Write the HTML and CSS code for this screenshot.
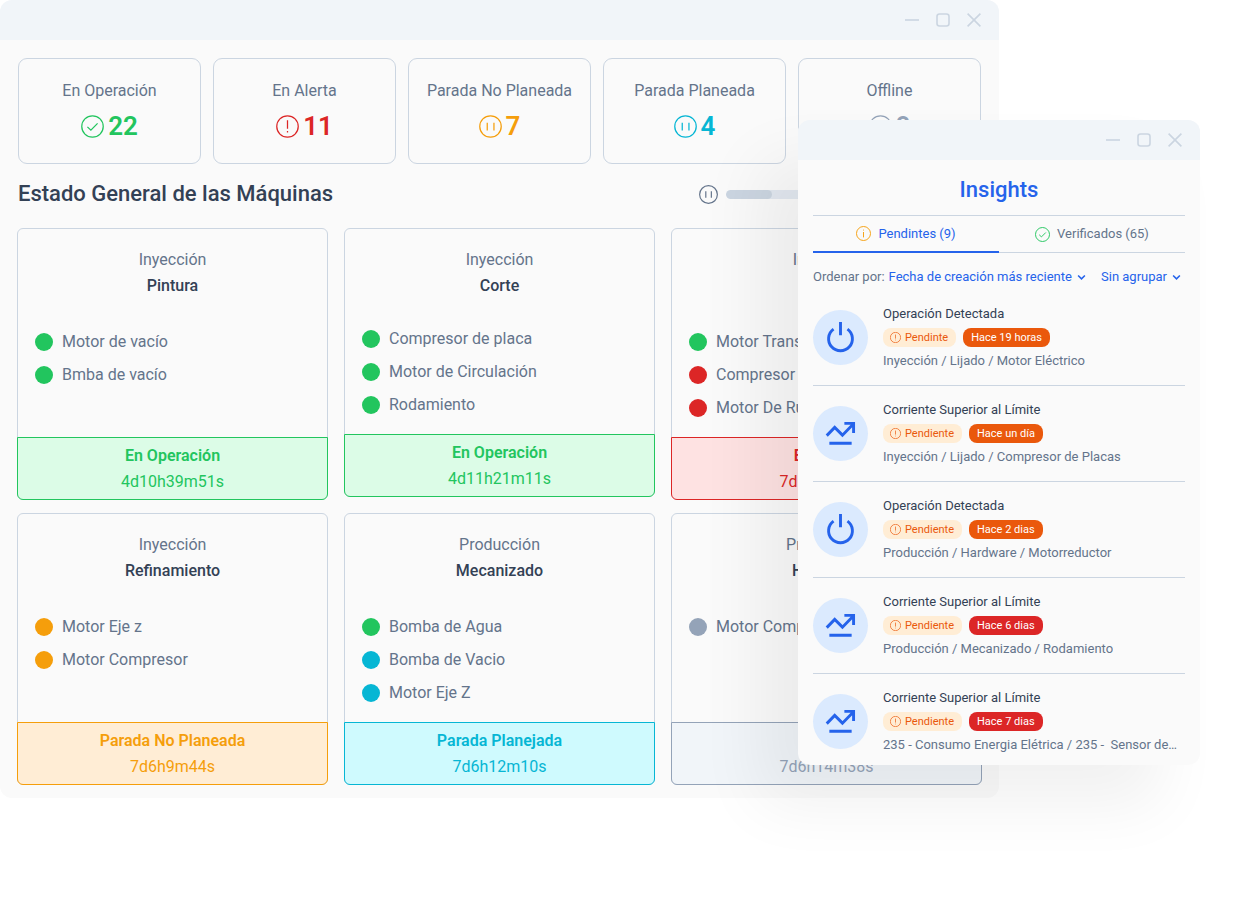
FILE: index.html
```
<!DOCTYPE html>
<html lang="es">
<head>
<meta charset="utf-8">
<meta name="viewport" content="width=device-width, initial-scale=1">
<title>Estado General de las Máquinas</title>
<link rel="stylesheet" href="styles.css">
</head>
<body>
<svg class="sprite" aria-hidden="true">
  <symbol id="i-min" viewBox="0 0 14 14"><path d="M0 7h14"/></symbol>
  <symbol id="i-max" viewBox="0 0 14 14"><rect x="1" y="1" width="12" height="12" rx="2.5"/></symbol>
  <symbol id="i-close" viewBox="0 0 14 14"><path d="M.6.6l12.8 12.8M13.4.6L.6 13.4"/></symbol>
  <symbol id="i-check" viewBox="0 0 24 24"><circle cx="12" cy="12" r="11.2"/><path d="M6.7 12.4l3.6 3.4 7-7"/></symbol>
  <symbol id="i-alert" viewBox="0 0 24 24"><circle cx="12" cy="12" r="11.2"/><path d="M12 5.6v8.8M12 16.8v1.4"/></symbol>
  <symbol id="i-info" viewBox="0 0 24 24"><circle cx="12" cy="12" r="11.2"/><path d="M12 9.6v8.6M12 5.8v1.4"/></symbol>
  <symbol id="i-pause" viewBox="0 0 24 24"><circle cx="12" cy="12" r="11.2"/><path d="M8.6 8v8.2M15.6 8v8.2"/></symbol>
  <symbol id="i-chevron" viewBox="0 0 8 6"><path d="M1 1.2l3 3 3-3"/></symbol>
  <symbol id="i-power" viewBox="0 0 32 32"><path d="M16 0v13.6M8.800 7.400a12.300 12.300 0 1 0 14.400 0"/></symbol>
  <symbol id="i-trend" viewBox="0 0 32 32"><path d="M1.8 18.200l8.200-8.500 8 8L28.500 7M20 5.500h9.500v10M4.500 26h23"/></symbol>
</svg>

<main class="window dashboard">
  <header class="titlebar">
    <button aria-label="Minimizar"><svg><use href="#i-min"/></svg></button>
    <button aria-label="Maximizar"><svg><use href="#i-max"/></svg></button>
    <button aria-label="Cerrar"><svg><use href="#i-close"/></svg></button>
  </header>
  <div class="content">
    <section class="stats">
      <article class="stat green"><h3>En Operación</h3><p><svg><use href="#i-check"/></svg>22</p></article>
      <article class="stat red"><h3>En Alerta</h3><p><svg><use href="#i-alert"/></svg>11</p></article>
      <article class="stat amber"><h3>Parada No Planeada</h3><p><svg><use href="#i-pause"/></svg>7</p></article>
      <article class="stat cyan"><h3>Parada Planeada</h3><p><svg><use href="#i-pause"/></svg>4</p></article>
      <article class="stat gray"><h3>Offline</h3><p><svg><use href="#i-pause"/></svg>8</p></article>
    </section>

    <div class="heading">
      <h2>Estado General de las Máquinas</h2>
      <div class="rotation">
        <button aria-label="Pausar"><svg><use href="#i-pause"/></svg></button>
        <progress value="18" max="100" aria-label="Rotación"></progress>
      </div>
    </div>

    <section class="machines">
      <article class="machine">
        <header><p>Inyección</p><h3>Pintura</h3></header>
        <ul><li class="green">Motor de vacío</li><li class="green">Bmba de vacío</li></ul>
        <footer class="green"><strong>En Operación</strong><span>4d10h39m51s</span></footer>
      </article>
      <article class="machine compact">
        <header><p>Inyección</p><h3>Corte</h3></header>
        <ul><li class="green">Compresor de placa</li><li class="green">Motor de Circulación</li><li class="green">Rodamiento</li></ul>
        <footer class="green"><strong>En Operación</strong><span>4d11h21m11s</span></footer>
      </article>
      <article class="machine">
        <header><p>Inyección</p><h3>Lijado</h3></header>
        <ul><li class="green">Motor Transportador</li><li class="red">Compresor de Placas</li><li class="red">Motor De Ruedas</li></ul>
        <footer class="red"><strong>En Alerta</strong><span>7d6h10m12s</span></footer>
      </article>
      <article class="machine">
        <header><p>Inyección</p><h3>Refinamiento</h3></header>
        <ul><li class="amber">Motor Eje z</li><li class="amber">Motor Compresor</li></ul>
        <footer class="amber"><strong>Parada No Planeada</strong><span>7d6h9m44s</span></footer>
      </article>
      <article class="machine">
        <header><p>Producción</p><h3>Mecanizado</h3></header>
        <ul><li class="green">Bomba de Agua</li><li class="cyan">Bomba de Vacio</li><li class="cyan">Motor Eje Z</li></ul>
        <footer class="cyan"><strong>Parada Planejada</strong><span>7d6h12m10s</span></footer>
      </article>
      <article class="machine">
        <header><p>Producción</p><h3>Hardware</h3></header>
        <ul><li class="gray">Motor Compresor</li></ul>
        <footer class="gray"><strong>Offline</strong><span>7d6h14m38s</span></footer>
      </article>
    </section>
  </div>
</main>

<aside class="window insights">
  <header class="titlebar">
    <button aria-label="Minimizar"><svg><use href="#i-min"/></svg></button>
    <button aria-label="Maximizar"><svg><use href="#i-max"/></svg></button>
    <button aria-label="Cerrar"><svg><use href="#i-close"/></svg></button>
  </header>
  <div class="panel">
    <h2>Insights</h2>
    <div class="tabs" role="tablist">
      <button class="tab active" role="tab" aria-selected="true"><svg class="amber"><use href="#i-info"/></svg>Pendintes (9)</button>
      <button class="tab" role="tab" aria-selected="false"><svg class="green"><use href="#i-check"/></svg>Verificados (65)</button>
    </div>
    <div class="filters">
      <div class="field">
        <label for="sort">Ordenar por:</label>
        <select id="sort"><option>Fecha de creación más reciente</option></select>
        <svg><use href="#i-chevron"/></svg>
      </div>
      <div class="field">
        <select id="group" aria-label="Agrupar"><option>Sin agrupar</option></select>
        <svg><use href="#i-chevron"/></svg>
      </div>
    </div>
    <ul class="feed">
      <li>
        <span class="avatar"><svg><use href="#i-power"/></svg></span>
        <div class="entry"><h3>Operación Detectada</h3>
          <div class="badges"><span class="badge pending"><svg><use href="#i-alert"/></svg>Pendinte</span><span class="badge recent">Hace 19 horas</span></div>
          <p>Inyección / Lijado / Motor Eléctrico</p></div>
      </li>
      <li>
        <span class="avatar"><svg><use href="#i-trend"/></svg></span>
        <div class="entry"><h3>Corriente Superior al Límite</h3>
          <div class="badges"><span class="badge pending"><svg><use href="#i-alert"/></svg>Pendiente</span><span class="badge recent">Hace un día</span></div>
          <p>Inyección / Lijado / Compresor de Placas</p></div>
      </li>
      <li>
        <span class="avatar"><svg><use href="#i-power"/></svg></span>
        <div class="entry"><h3>Operación Detectada</h3>
          <div class="badges"><span class="badge pending"><svg><use href="#i-alert"/></svg>Pendiente</span><span class="badge recent">Hace 2 dias</span></div>
          <p>Producción / Hardware / Motorreductor</p></div>
      </li>
      <li>
        <span class="avatar"><svg><use href="#i-trend"/></svg></span>
        <div class="entry"><h3>Corriente Superior al Límite</h3>
          <div class="badges"><span class="badge pending"><svg><use href="#i-alert"/></svg>Pendiente</span><span class="badge late">Hace 6 dias</span></div>
          <p>Producción / Mecanizado / Rodamiento</p></div>
      </li>
      <li>
        <span class="avatar"><svg><use href="#i-trend"/></svg></span>
        <div class="entry"><h3>Corriente Superior al Límite</h3>
          <div class="badges"><span class="badge pending"><svg><use href="#i-alert"/></svg>Pendiente</span><span class="badge late">Hace 7 dias</span></div>
          <p>235 - Consumo Energia Elétrica / 235 -&nbsp; Sensor de…</p></div>
      </li>
    </ul>
  </div>
</aside>
</body>
</html>
```
FILE: styles.css
```
* { box-sizing: border-box; margin: 0; padding: 0; }

body {
  position: relative;
  min-height: 100vh;
  background: #fff;
  color: #64748b;
  font: 400 16px/26px Roboto, "Noto Sans", sans-serif;
}

button, select { border: 0; background: none; color: inherit; font: inherit; cursor: pointer; }
ul { list-style: none; }
svg { display: block; flex: none; fill: none; stroke: currentColor; }
.sprite { position: absolute; width: 0; height: 0; }

/* Status colours */
.green { --tone: #22c55e; --tint: #dcfce7; }
.red { --tone: #dc2626; --tint: #fee2e2; }
.amber { --tone: #f59e0b; --tint: #ffedd5; }
.cyan { --tone: #06b6d4; --tint: #cffafe; }
.gray { --tone: #94a3b8; --tint: #f1f5f9; }

/* Windows */
.window { border-radius: 12px; background: #fafafa; }
.dashboard { width: calc(100% - 246px); }
.insights {
  position: absolute;
  top: 120px;
  right: 45px;
  width: 402px;
  box-shadow: -40px 40px 64px rgba(0, 0, 0, .06);
}
.titlebar {
  display: flex;
  align-items: center;
  justify-content: flex-end;
  gap: 17px;
  height: 40px;
  padding: 0 18px;
  border-radius: 12px 12px 0 0;
  background: #f1f5f9;
  color: #cbd5e1;
}
.titlebar svg { width: 14px; height: 14px; stroke-width: 1.6; }
.content { padding: 18px 17px 13px; }

/* Summary cards */
.stats { display: grid; grid-template-columns: repeat(5, 1fr); gap: 12px; padding: 0 1px; }
.stat {
  padding: 20px 8px 21px;
  border: 1px solid #cbd5e1;
  border-radius: 9px;
  text-align: center;
}
.stat h3 { margin-bottom: 7px; font-size: 16px; font-weight: 400; line-height: 24px; }
.stat p {
  display: flex;
  align-items: center;
  justify-content: center;
  gap: 4px;
  color: var(--tone);
  font-size: 26px;
  font-weight: 600;
  line-height: 32px;
}
.stat svg { width: 23px; height: 23px; stroke-width: 1.3; }

.heading {
  display: flex;
  align-items: center;
  justify-content: space-between;
  height: 64px;
  padding: 0 1px 4px;
}
.heading h2 { color: #334155; font-size: 22px; font-weight: 500; line-height: 30px; }
.rotation { display: flex; align-items: center; gap: 8px; }
.rotation svg { width: 19px; height: 19px; stroke-width: 1.5; }
progress { width: 255px; height: 9px; appearance: none; border: 0; border-radius: 5px; background: #e2e8f0; overflow: hidden; }
progress::-webkit-progress-bar { background: #e2e8f0; }
progress::-webkit-progress-value { border-radius: 5px; background: #cbd5e1; }

/* Machine cards */
.machines { display: grid; grid-template-columns: repeat(3, 1fr); gap: 13px 16px; align-items: start; }
.machine {
  display: flex;
  flex-direction: column;
  height: 272px;
  border: 1px solid #cbd5e1;
  border-radius: 6px;
}
.machine.compact { height: 269px; }
.machine header { padding-top: 18px; text-align: center; }
.machine h3 { color: #334155; font-size: 16px; font-weight: 500; line-height: 26px; }
.machine ul { flex: 1; display: grid; align-content: start; gap: 13px; padding: 33px 17px 0; }
.machine.compact ul { padding-top: 30px; }
.machine li { display: flex; align-items: center; gap: 9px; line-height: 20px; }
.machine li::before { content: ""; width: 18px; height: 18px; border-radius: 50%; background: var(--tone); }
.machine footer {
  display: grid;
  margin: 0 -1px -1px;
  padding: 5px 8px 4px;
  border: 1px solid var(--tone);
  border-radius: 0 0 6px 6px;
  background: var(--tint);
  color: var(--tone);
  text-align: center;
}
.machine strong { font-weight: 600; }

/* Insights panel */
.panel { padding: 15px 15px 12px; font-size: 13px; line-height: 16px; }
.panel h2 { margin-bottom: 10px; color: #2563eb; font-size: 22px; font-weight: 500; line-height: 30px; text-align: center; }
.tabs { display: grid; grid-template-columns: 1fr 1fr; border-top: 1px solid #cbd5e1; }
.tab {
  display: flex;
  align-items: center;
  justify-content: center;
  gap: 7px;
  height: 37px;
  border-bottom: 1px solid #cbd5e1;
}
.tab.active { border-bottom: 2px solid #2563eb; color: #2563eb; }
.tab svg { width: 15px; height: 15px; color: var(--tone); stroke-width: 1.5; }
.filters { display: flex; justify-content: space-between; padding: 16px 4px 4px 0; }
.field { display: flex; align-items: center; gap: 4px; }
.field select { appearance: none; color: #2563eb; }
.field svg { width: 9px; height: 7px; color: #2563eb; stroke-width: 1.4; }

.feed li { display: flex; align-items: center; gap: 15px; padding: 16px 0; border-top: 1px solid #cbd5e1; }
.feed li:first-child { border-color: transparent; }
.feed li:last-child { padding-bottom: 0; }
.avatar { display: grid; place-items: center; flex: none; width: 55px; height: 55px; border-radius: 50%; background: #dbeafe; color: #2563eb; }
.avatar svg { width: 31px; height: 31px; stroke-width: 3; }
.entry { min-width: 0; }
.entry h3 { color: #334155; font-size: 13px; font-weight: 400; line-height: 16px; }
.entry p { overflow: hidden; text-overflow: ellipsis; white-space: nowrap; }
.badges { display: flex; gap: 7px; margin: 6px 0; }
.badge { display: flex; align-items: center; gap: 4px; padding: 0 8px; border-radius: 8px; font-size: 11px; line-height: 19px; }
.badge svg { width: 11px; height: 11px; stroke-width: 1.5; }
.pending { padding-left: 7px; background: #ffedd5; color: #ea580c; }
.recent { background: #ea580c; color: #fff; }
.late { background: #dc2626; color: #fff; }
```
